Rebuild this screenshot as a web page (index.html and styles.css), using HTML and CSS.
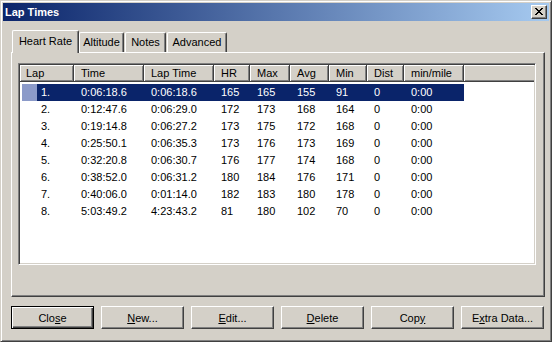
FILE: index.html
```html
<!DOCTYPE html>
<html>
<head>
<meta charset="utf-8">
<title>Lap Times</title>
<link rel="stylesheet" href="styles.css">
</head>
<body>
<div class="window">
  <div class="titlebar">
    <span class="title">Lap Times</span>
    <div class="cap-btn">
      <svg width="8" height="7" viewBox="0 0 8 7" shape-rendering="crispEdges">
        <path fill="#000" d="M0 0h2v1H0zM6 0h2v1H6zM1 1h2v1H1zM5 1h2v1H5zM2 2h4v1H2zM3 3h2v1H3zM2 4h4v1H2zM1 5h2v1H1zM5 5h2v1H5zM0 6h2v1H0zM6 6h2v1H6z"/>
      </svg>
    </div>
  </div>

  <div class="tabstrip">
    <div class="tab active tab-hr">Heart Rate</div>
    <div class="tab tab-alt">Altitude</div>
    <div class="tab tab-notes">Notes</div>
    <div class="tab tab-adv">Advanced</div>
  </div>

  <div class="panel">
    <div class="listview">
      <div class="header cols-head">
        <div class="hcell first">Lap</div>
        <div class="hcell">Time</div>
        <div class="hcell">Lap Time</div>
        <div class="hcell">HR</div>
        <div class="hcell">Max</div>
        <div class="hcell">Avg</div>
        <div class="hcell">Min</div>
        <div class="hcell">Dist</div>
        <div class="hcell">min/mile</div>
        <div class="hcell filler"></div>
      </div>
      <div class="rows">
        <div class="row cols selected"><div class="cell first">1.</div><div class="cell">0:06:18.6</div><div class="cell">0:06:18.6</div><div class="cell">165</div><div class="cell">165</div><div class="cell">155</div><div class="cell">91</div><div class="cell">0</div><div class="cell">0:00</div></div>
        <div class="row cols"><div class="cell first">2.</div><div class="cell">0:12:47.6</div><div class="cell">0:06:29.0</div><div class="cell">172</div><div class="cell">173</div><div class="cell">168</div><div class="cell">164</div><div class="cell">0</div><div class="cell">0:00</div></div>
        <div class="row cols"><div class="cell first">3.</div><div class="cell">0:19:14.8</div><div class="cell">0:06:27.2</div><div class="cell">173</div><div class="cell">175</div><div class="cell">172</div><div class="cell">168</div><div class="cell">0</div><div class="cell">0:00</div></div>
        <div class="row cols"><div class="cell first">4.</div><div class="cell">0:25:50.1</div><div class="cell">0:06:35.3</div><div class="cell">173</div><div class="cell">176</div><div class="cell">173</div><div class="cell">169</div><div class="cell">0</div><div class="cell">0:00</div></div>
        <div class="row cols"><div class="cell first">5.</div><div class="cell">0:32:20.8</div><div class="cell">0:06:30.7</div><div class="cell">176</div><div class="cell">177</div><div class="cell">174</div><div class="cell">168</div><div class="cell">0</div><div class="cell">0:00</div></div>
        <div class="row cols"><div class="cell first">6.</div><div class="cell">0:38:52.0</div><div class="cell">0:06:31.2</div><div class="cell">180</div><div class="cell">184</div><div class="cell">176</div><div class="cell">171</div><div class="cell">0</div><div class="cell">0:00</div></div>
        <div class="row cols"><div class="cell first">7.</div><div class="cell">0:40:06.0</div><div class="cell">0:01:14.0</div><div class="cell">182</div><div class="cell">183</div><div class="cell">180</div><div class="cell">178</div><div class="cell">0</div><div class="cell">0:00</div></div>
        <div class="row cols"><div class="cell first">8.</div><div class="cell">5:03:49.2</div><div class="cell">4:23:43.2</div><div class="cell">81</div><div class="cell">180</div><div class="cell">102</div><div class="cell">70</div><div class="cell">0</div><div class="cell">0:00</div></div>
      </div>
    </div>
  </div>

  <div class="buttons">
    <div class="btn default">Clo<u>s</u>e</div>
    <div class="btn"><u>N</u>ew...</div>
    <div class="btn"><u>E</u>dit...</div>
    <div class="btn"><u>D</u>elete</div>
    <div class="btn">Cop<u>y</u></div>
    <div class="btn">E<u>x</u>tra Data...</div>
  </div>
</div>
</body>
</html>
```

FILE: styles.css
```css
* { box-sizing: border-box; }

html, body {
  margin: 0;
  padding: 0;
  background: #D4D0C8;
}

body {
  width: 552px;
  height: 342px;
  overflow: hidden;
  font-family: "Liberation Sans", Arial, sans-serif;
  font-size: 11px;
  color: #000;
}

.window {
  width: 552px;
  height: 342px;
  background: #D4D0C8;
  border: 1px solid;
  border-color: #D4D0C8 #404040 #404040 #D4D0C8;
  box-shadow: inset 1px 1px #FFFFFF, inset -1px -1px #808080;
  padding: 2px;
}

/* title bar */
.titlebar {
  height: 18px;
  background: linear-gradient(to right, #0A246A, #A6CAF0);
  display: flex;
  align-items: center;
  justify-content: space-between;
  padding: 0 2px 0 2px;
}

.title {
  color: #fff;
  font-weight: bold;
  font-size: 11px;
  line-height: 18px;
}

.cap-btn {
  width: 16px;
  height: 14px;
  background: #D4D0C8;
  border: 1px solid;
  border-color: #FFFFFF #404040 #404040 #FFFFFF;
  box-shadow: inset -1px -1px #808080;
  display: flex;
  align-items: center;
  justify-content: center;
  padding: 0 0 1px 0;
}

.cap-btn svg { display: block; }

/* tabs */
.tabstrip {
  display: flex;
  align-items: flex-start;
  height: 22px;
  margin: 9px 0 0 9px;
}

.tab {
  height: 20px;
  margin-top: 2px;
  background: #D4D0C8;
  border-left: 1px solid #FFFFFF;
  border-top: 1px solid #FFFFFF;
  border-right: 1px solid #404040;
  box-shadow: inset -1px 0 #808080;
  border-radius: 2px 2px 0 0;
  display: flex;
  align-items: center;
  justify-content: center;
  padding-bottom: 1px;
  white-space: nowrap;
}

.tab.active {
  height: 23px;
  margin-top: 0;
  position: relative;
  z-index: 1;
  padding-bottom: 3px;
}

.tab-hr { width: 67px; }
.tab-alt { width: 45px; }
.tab-notes { width: 41px; margin-left: 1px; }
.tab-adv { width: 60px; margin-left: 1px; }

/* panel */
.panel {
  margin-left: 8px;
  width: 534px;
  height: 245px;
  border: 1px solid;
  border-color: #FFFFFF #404040 #404040 #FFFFFF;
  box-shadow: inset -1px -1px #808080;
  padding: 10px 0 0 6px;
}

.listview {
  width: 518px;
  height: 202px;
  background: #fff;
  border: 1px solid;
  border-color: #808080 #FFFFFF #FFFFFF #808080;
  box-shadow: inset 1px 1px #404040, inset -1px -1px #D4D0C8;
  padding: 1px;
  overflow: hidden;
}

.cols-head {
  display: grid;
  grid-template-columns: 54px 70px 70px 36px 40px 39px 38px 37px 60px 1fr;
}

.cols {
  display: grid;
  grid-template-columns: 54px 70px 70px 36px 40px 39px 38px 37px 60px;
  width: 444px;
}

.header {
  height: 17px;
}

.hcell {
  background: #D4D0C8;
  border-right: 1px solid #404040;
  border-bottom: 1px solid #404040;
  box-shadow: inset 1px 1px #FFFFFF, inset -1px -1px #808080;
  padding-left: 7px;
  line-height: 16px;
  white-space: nowrap;
  overflow: hidden;
}

.hcell.first { padding-left: 6px; }
.hcell.filler { border-right: none; box-shadow: inset 1px 1px #FFFFFF, inset 0 -1px #808080; }

.rows {
  padding-top: 2px;
}

.row {
  height: 17px;
  line-height: 17px;
}

.cell {
  padding-left: 7px;
  white-space: nowrap;
}

.cell.first { padding-left: 21px; }

.row.selected {
  color: #fff;
  background: linear-gradient(to right, transparent 2px, #8B9AC9 2px, #8B9AC9 17px, #0A246A 17px);
}

/* buttons */
.buttons {
  display: flex;
  gap: 7px;
  margin: 9px 0 0 8px;
}

.btn {
  width: 83px;
  height: 23px;
  background: #D4D0C8;
  border: 1px solid;
  border-color: #FFFFFF #404040 #404040 #FFFFFF;
  box-shadow: inset -1px -1px #808080;
  display: flex;
  align-items: center;
  justify-content: center;
  white-space: nowrap;
}

.btn.default {
  border: 1px solid #000;
  box-shadow: inset 1px 1px #FFFFFF, inset -1px -1px #404040, inset -2px -2px #808080;
}

.btn u { text-underline-offset: 1px; }
```
